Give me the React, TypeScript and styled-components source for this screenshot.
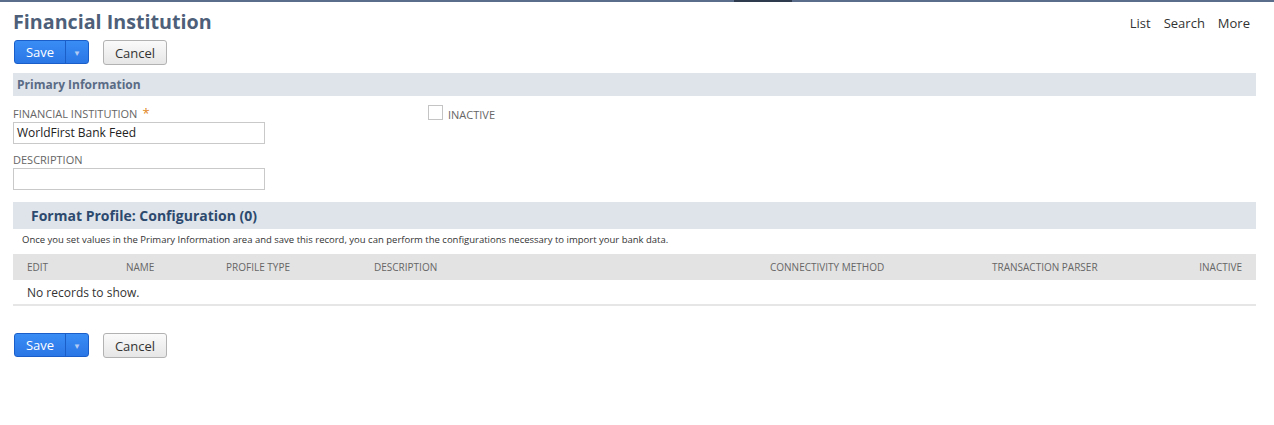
import React from "react";
import styled, { createGlobalStyle } from "styled-components";

const Global = createGlobalStyle`
  html, body { margin: 0; padding: 0; background: #fff; }
  body { font-family: "Open Sans", "Liberation Sans", sans-serif; color: #333; }
  * { box-sizing: border-box; }
`;

const TopBar = styled.div`
  height: 2px;
  background: #5a6e8c;
  display: flex;
`;
const TopBarMark = styled.div`
  margin-left: 734px;
  width: 58px;
  height: 2px;
  background: #2e3a4e;
`;

const Page = styled.div`
  padding: 0 18px 0 13px;
`;

const TitleRow = styled.div`
  display: flex;
  align-items: flex-start;
  justify-content: space-between;
  padding-top: 6px;
`;

const Title = styled.h1`
  margin: 0;
  font-size: 19.7px;
  line-height: 28px;
  font-weight: 700;
  color: #4d5f79;
`;

const NavLinks = styled.div`
  display: flex;
  gap: 13px;
  padding-top: 6px;
  font-size: 13px;
  color: #333;
  margin-right: 6px;
`;

const ButtonBar = styled.div<{ $top: number }>`
  display: flex;
  gap: 14px;
  margin-top: ${(p) => p.$top}px;
  padding-left: 1px;
`;

const SaveGroup = styled.div`
  display: flex;
  height: 24px;
  border: 1px solid #1a5fc9;
  border-radius: 3px;
  background: linear-gradient(#3a8df5, #2a76e6);
  overflow: hidden;
`;
const SaveMain = styled.div`
  width: 51px;
  display: flex;
  align-items: center;
  justify-content: center;
  color: #fff;
  font-size: 13px;
  font-weight: 500;
  border-right: 1px solid #1b5ec8;
`;
const SaveArrow = styled.div`
  width: 22px;
  display: flex;
  align-items: center;
  justify-content: center;
  color: #b3cbf2;
  font-size: 8px;
`;

const CancelButton = styled.div`
  width: 64px;
  height: 25px;
  border: 1px solid #b2b2b2;
  border-radius: 3px;
  background: linear-gradient(#fafafa, #e6e6e6);
  display: flex;
  align-items: center;
  justify-content: center;
  font-size: 13px;
  font-weight: 500;
  color: #333;
`;

const SectionHeader = styled.div<{ $h: number; $top: number; $pad: number }>`
  height: ${(p) => p.$h}px;
  margin-top: ${(p) => p.$top}px;
  background: #dfe4eb;
  display: flex;
  align-items: center;
  padding-left: ${(p) => p.$pad}px;
`;
const SectionTitle = styled.span<{ $size: number; $color: string }>`
  font-size: ${(p) => p.$size}px;
  font-weight: 700;
  color: ${(p) => p.$color};
`;

const FieldGrid = styled.div`
  display: grid;
  grid-template-columns: 415px 1fr;
  padding-top: 5px;
`;
const FieldColumn = styled.div`
  display: flex;
  flex-direction: column;
`;
const Label = styled.div<{ $top: number }>`
  font-size: 11px;
  line-height: 14px;
  color: #666;
  margin-top: ${(p) => p.$top}px;
  margin-bottom: 1px;
`;
const Required = styled.span`
  color: #e0851b;
  margin-left: 5px;
  font-size: 13px;
`;
const Input = styled.div`
  width: 252px;
  height: 22px;
  border: 1px solid #c9c9c9;
  font-size: 12px;
  line-height: 20px;
  padding-left: 3px;
  color: #222;
`;

const CheckRow = styled.div`
  display: flex;
  align-items: center;
  gap: 5px;
  margin-top: 2px;
`;
const Checkbox = styled.div`
  width: 15px;
  height: 15px;
  border: 1px solid #c4c4c4;
  background: #fff;
`;
const CheckLabel = styled.span`
  font-size: 11px;
  color: #666;
  margin-top: 4px;
`;

const Note = styled.div`
  font-size: 9.5px;
  color: #333;
  padding: 4px 0 0 9px;
  line-height: 13px;
`;

const Table = styled.div`
  margin-top: 8px;
  border-bottom: 2px solid #e6e6e6;
`;
const HeadRow = styled.div`
  height: 26px;
  background: #e3e3e3;
  display: grid;
  grid-template-columns: 99px 100px 148px 396px 222px 1fr 80px;
  align-items: center;
  padding: 0 14px;
  font-size: 10px;
  color: #666;
`;
const HeadCell = styled.div<{ $right?: boolean }>`
  text-align: ${(p) => (p.$right ? "right" : "left")};
  white-space: nowrap;
`;
const EmptyRow = styled.div`
  height: 24px;
  display: flex;
  align-items: center;
  padding-left: 14px;
  font-size: 12px;
  color: #333;
`;

function Buttons({ top }: { top: number }) {
  return (
    <ButtonBar $top={top}>
      <SaveGroup>
        <SaveMain>Save</SaveMain>
        <SaveArrow>▼</SaveArrow>
      </SaveGroup>
      <CancelButton>Cancel</CancelButton>
    </ButtonBar>
  );
}

export default function App() {
  return (
    <>
      <Global />
      <TopBar>
        <TopBarMark />
      </TopBar>
      <Page>
        <TitleRow>
          <Title>Financial Institution</Title>
          <NavLinks>
            <span>List</span>
            <span>Search</span>
            <span>More</span>
          </NavLinks>
        </TitleRow>
        <Buttons top={4} />
        <SectionHeader $h={23} $top={8} $pad={4}>
          <SectionTitle $size={12} $color="#5a6b85">Primary Information</SectionTitle>
        </SectionHeader>
        <FieldGrid>
          <FieldColumn>
            <Label $top={5}>
              FINANCIAL INSTITUTION<Required>*</Required>
            </Label>
            <Input>WorldFirst Bank Feed</Input>
            <Label $top={9}>DESCRIPTION</Label>
            <Input />
          </FieldColumn>
          <FieldColumn>
            <CheckRow>
              <Checkbox />
              <CheckLabel>INACTIVE</CheckLabel>
            </CheckRow>
          </FieldColumn>
        </FieldGrid>
        <SectionHeader $h={27} $top={12} $pad={18}>
          <SectionTitle $size={14} $color="#2d4a6e">Format Profile: Configuration (0)</SectionTitle>
        </SectionHeader>
        <Note>
          Once you set values in the Primary Information area and save this record, you can perform the configurations necessary to import your bank data.
        </Note>
        <Table>
          <HeadRow>
            <HeadCell>EDIT</HeadCell>
            <HeadCell>NAME</HeadCell>
            <HeadCell>PROFILE TYPE</HeadCell>
            <HeadCell>DESCRIPTION</HeadCell>
            <HeadCell>CONNECTIVITY METHOD</HeadCell>
            <HeadCell>TRANSACTION PARSER</HeadCell>
            <HeadCell $right>INACTIVE</HeadCell>
          </HeadRow>
          <EmptyRow>No records to show.</EmptyRow>
        </Table>
        <Buttons top={27} />
      </Page>
    </>
  );
}
